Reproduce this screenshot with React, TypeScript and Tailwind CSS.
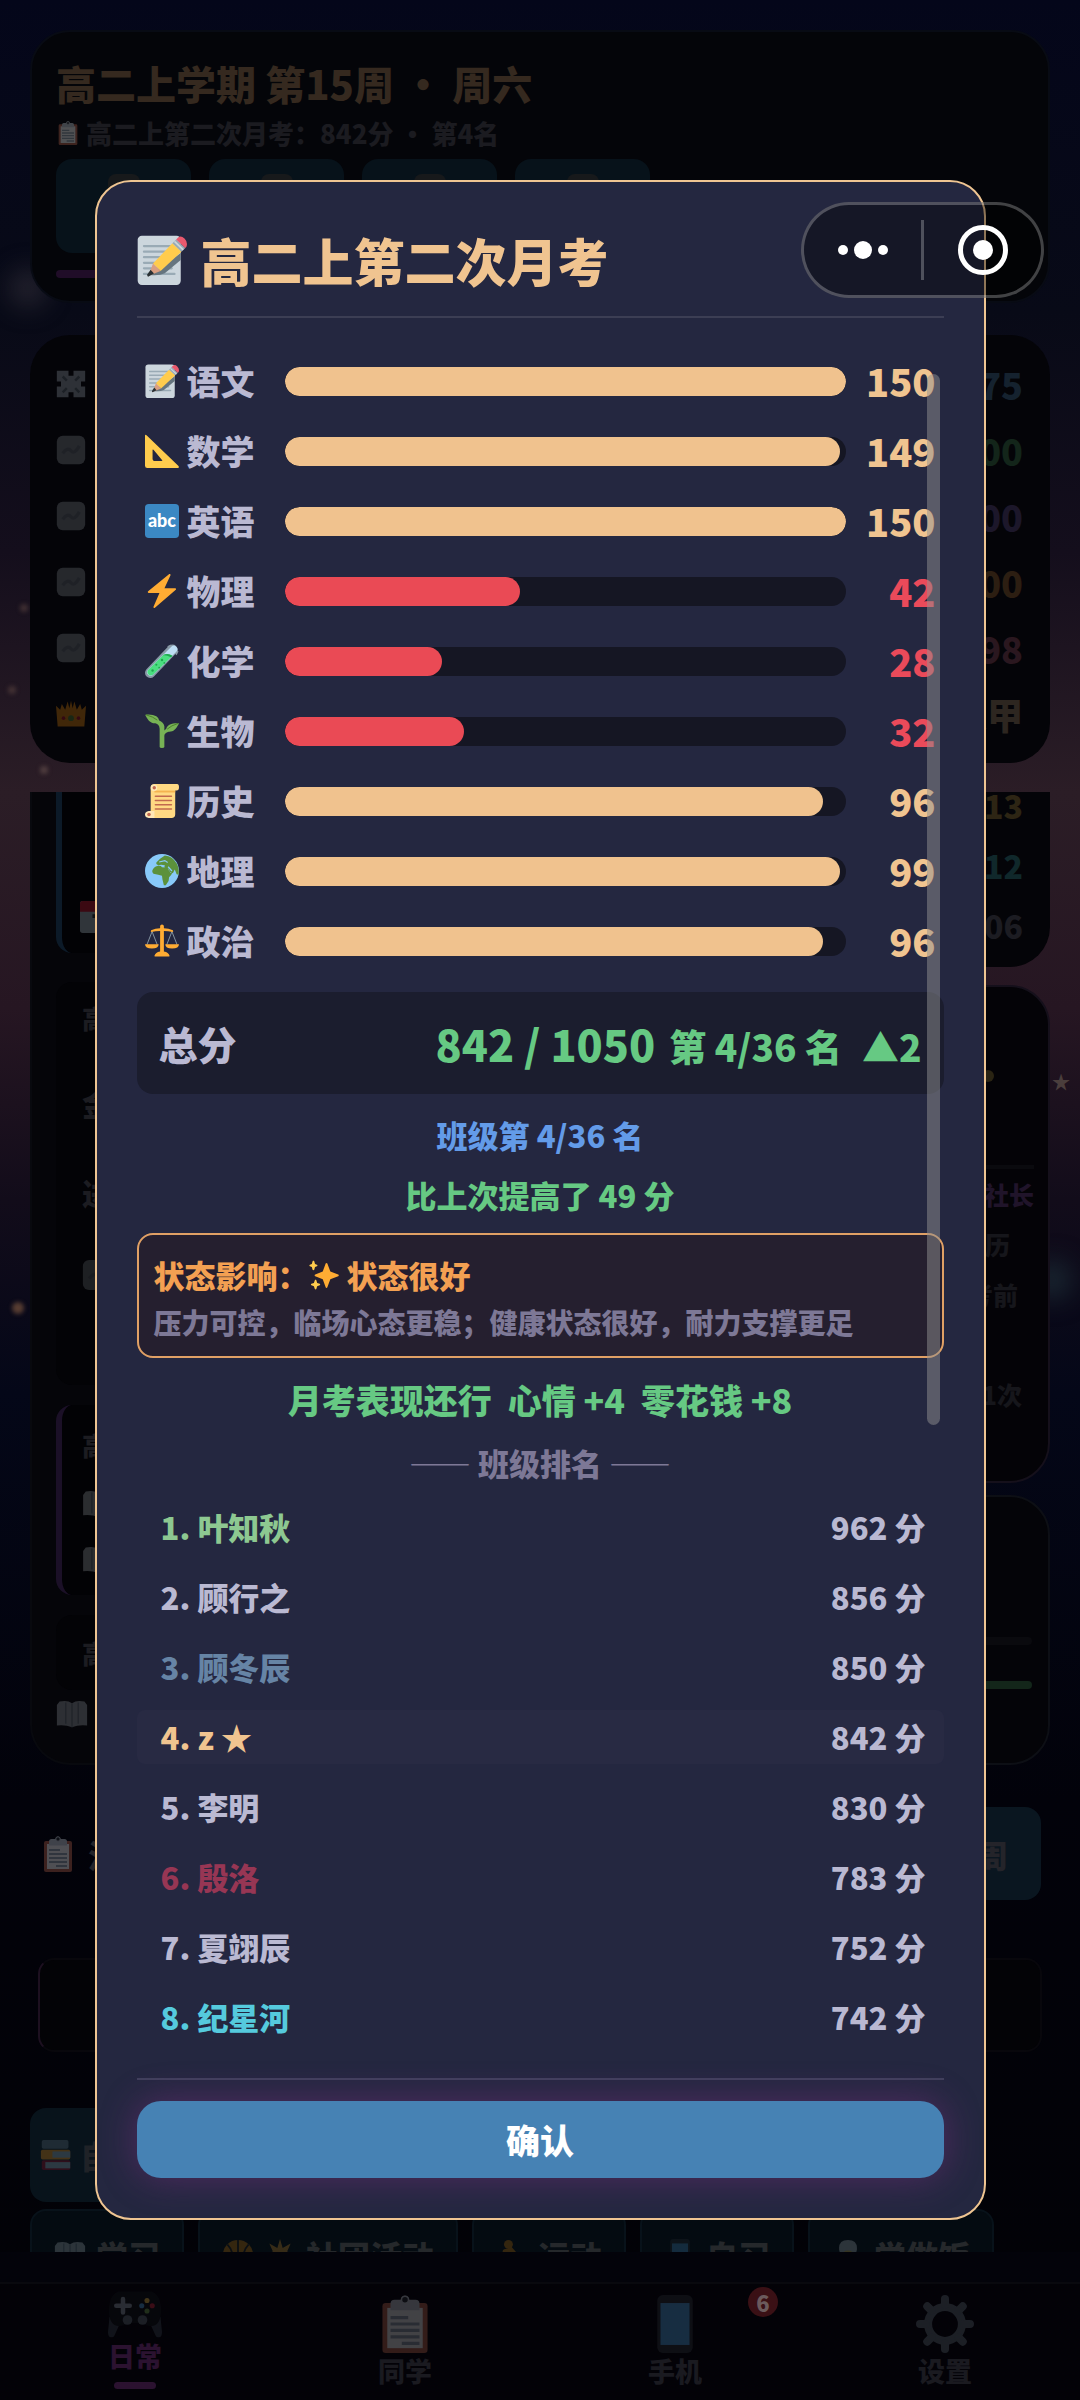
import React from "react";

type IconProps = { className: string };

function Svg({ className, children }: IconProps & { children: React.ReactNode }) {
  return (
    <svg viewBox="0 0 36 36" aria-hidden="true" className={className}>
      {children}
    </svg>
  );
}

function Memo({ className }: IconProps) {
  return (
    <Svg className={className}>
      <rect x="0.5" y="0.5" width="31" height="35.5" rx="3" fill="#CCD6DD" />
      <path
        d="M5 8h20M5 12h17M5 16h12M5 20h8M5 24h20M5 28h22"
        stroke="#99AAB5"
        strokeWidth="1.6"
        strokeLinecap="round"
      />
      <path d="M9.5 28.8 31.5 13v5L20 27.5q-4 2-10.500 1.300z" fill="#66757F" />
      <path d="M11.500 20.500 25.500 6l6.500 6-15 14z" fill="#FFCC4D" />
      <path d="M11.500 20.500 17 26l-8.600 3.400z" fill="#D99E82" />
      <path d="M9.800 25 12.200 27.700 8 30q-1-.6-.5-1.800z" fill="#292F33" />
      <path d="M25.500 6 28.200 3.200 34.800 9.300 32 12z" fill="#99AAB5" />
      <path d="M27 4.600 33.300 10.700" stroke="#CCD6DD" strokeWidth="1.200" />
      <path d="M28.200 3.200 29.600 1.800q2-1.800 4.600.8t1.400 5.800l-.8.900z" fill="#EA596E" />
    </Svg>
  );
}

function Triangle({ className }: IconProps) {
  return (
    <Svg className={className}>
      <path
        fillRule="evenodd"
        fill="#FFCC4D"
        d="M0 2Q0 .2 1.600 1.400L35.200 33.600Q37 36 34.500 36H2.500Q0 36 0 33.500zM8 17v9.500q0 2 2 2h7.500q1.500 0 .5-1L9 16.600q-1-.8-1 .4z"
      />
    </Svg>
  );
}

function Abc({ className }: IconProps) {
  return (
    <Svg className={className}>
      <rect width="36" height="36" rx="4" fill="#3B88C3" />
      <text
        x="18"
        y="24"
        textAnchor="middle"
        fontFamily="Lato, sans-serif"
        fontWeight="900"
        fontSize="19"
        fill="#fff"
      >
        abc
      </text>
    </Svg>
  );
}

function Bolt({ className }: IconProps) {
  return (
    <Svg className={className}>
      <path
        fill="#FFAC33"
        d="M32.900 15.600c-.1-.4-.5-.6-.9-.6H20.600L27 1.400c.2-.4.100-.9-.3-1.200-.4-.3-.9-.2-1.300.1L3.300 18.200c-.3.300-.4.700-.3 1.100.100.400.5.700.9.700h11.400L9 34.600c-.2.400-.1.900.3 1.200.4.300.9.200 1.200-.1l22.100-18.900c.3-.3.400-.7.300-1.200z"
      />
    </Svg>
  );
}

function Tube({ className }: IconProps) {
  return (
    <Svg className={className}>
      <path d="M5.500 30.500 29 6" stroke="#8899A6" strokeWidth="11" strokeLinecap="round" />
      <path d="M23.500 2.500 27.500.5 35.500 8 33.500 12z" fill="#8899A6" />
      <path d="M6 30 30.500 5.500" stroke="#BDDDF4" strokeWidth="7.500" strokeLinecap="round" />
      <path d="M3.500 27.300 19 12q5-3 10 .5L8.500 32.600q-2.500 1.900-4.800-.4t-.2-4.900z" fill="#4ADE80" />
      <path d="M19 12q5-3 10 .5l-1.500 1.500q-5-2.500-8.500-2z" fill="#1FA84F" />
      <g fill="#1FA84F">
        <circle cx="8" cy="28" r="1.300" />
        <circle cx="12" cy="22" r="1.100" />
        <circle cx="15" cy="25" r="1" />
        <circle cx="18" cy="17" r="1.300" />
        <circle cx="20.500" cy="20" r="1" />
      </g>
    </Svg>
  );
}

function Sprout({ className }: IconProps) {
  return (
    <Svg className={className}>
      <path
        fill="#77B255"
        d="M22.500 15.500C24 11 28 9.500 35.500 9.700q.8.200.2.900C32.500 16.500 30 19 25 18.700q-5 1.300-4.500 5.300V35q-.2 1-2.500 1t-2.500-1V15.500q-.5-5-4.500-5.800C6 10 3.500 7 .5 1.500Q.2.500 1.200.6 8 0 12 2.500q3 2 3 4.500 4.500 1.500 5.500 6v4.500z"
      />
      <path d="M1 .8Q9 3 13 6.500M35 10Q28 12 23.500 16" stroke="#3E721D" strokeWidth=".8" fill="none" />
    </Svg>
  );
}

function Scroll({ className }: IconProps) {
  return (
    <Svg className={className}>
      <path d="M6 4Q6 0 10 0h24q2 0 2 3.500T33.500 7H32v25q0 4-4 4H6z" fill="#FFD983" />
      <path d="M10 7h22V9H10z" fill="#F4B350" />
      <circle cx="9.500" cy="4" r="3.500" fill="#FFE8B6" />
      <circle cx="9.800" cy="4" r="1.800" fill="#C1694F" />
      <path d="M4 28.500h6V36H4q-4-.5-4-3.700t4-3.800z" fill="#FFE8B6" />
      <circle cx="4.200" cy="32.300" r="1.900" fill="#C1694F" />
      <path
        d="M11 13h17M11 17.500h17M11 22h17M11 26.500h17"
        stroke="#C1694F"
        strokeWidth="1.600"
        strokeLinecap="round"
      />
    </Svg>
  );
}

function Globe({ className }: IconProps) {
  return (
    <Svg className={className}>
      <circle cx="18" cy="18" r="18" fill="#88C9F9" />
      <path
        fill="#5C913B"
        d="M8 17q2-4 6-4.500 3-.3 4 1.500l6 .5q1 3 3 5.500l2-.5q-1 3-3.500 5l-.5 4-3 4.500h-2l-1.500-6-.5-4-4-1-5-1q-2-2-1-4zM12 9l4-4 5-3.500Q29 2 34 10.500 36.500 16 35.500 22l-2-.5-2-5-2 4-3-1.500-2-4-4-1 .5-2-4-.5-3 .5-2-1.500z"
      />
      <path d="M24.500 13.500 28.500 18M15 8.500l6-1.500 3 2" stroke="#88C9F9" strokeWidth="1.300" fill="none" />
    </Svg>
  );
}

function Scales({ className }: IconProps) {
  return (
    <Svg className={className}>
      <path d="M7.500 8 2 22M7.500 8 13 22M28.500 8 23 22M28.500 8 34 22" stroke="#8899A6" strokeWidth="1" />
      <path
        fill="#FFAC33"
        d="M16 2.500q0-2 2-2t2 2v2q5 .3 9.500 2 1 1-.2 2-5-1.200-9.300-1.200V29q5 1 6 4.500 0 1-1 1H11q-1 0-1-1Q11 30 16 29V7.300q-5 0-9.300 1.200-1.200-1-.2-2Q11 4.800 16 4.500zM0 21.500h14.500q0 4.500-7.200 4.500T0 21.500zM21.500 21.500H36q0 4.500-7.300 4.500t-7.200-4.500z"
      />
    </Svg>
  );
}

function Sparkles({ className }: IconProps) {
  return (
    <Svg className={className}>
      <path
        fill="#FFAC33"
        d="M35 17.500l-9.400-3.600L22 4.300C21.800 3.800 21.500 3.500 21 3.500s-.8.300-1 .8l-3.500 9.600-9 3.600c-.5.200-.7.600-.7 1s.2.800.7 1l9 3.600L20 32.700c.2.500.5.800 1 .8s.8-.3 1-.8l3.600-9.600 9.400-3.600c.5-.2.700-.6.700-1s-.2-.8-.7-1z"
      />
      <path
        fill="#FFCC4D"
        d="M12.800 28.600l-3-1-1-3.300c-.2-.4-.5-.6-.9-.6s-.7.200-.9.600l-1.100 3.300-3 1c-.4.200-.6.500-.6.900s.2.700.6.900l3 1.100 1.100 3.400c.2.400.5.600.9.600s.7-.2.900-.6l1-3.400 3-1.100c.4-.2.600-.5.600-.9s-.2-.7-.6-.9zM9.500 5.700 7.200 4.700 6.300 1.500C6.100 1.100 5.700.9 5.300.9s-.8.200-1 .6l-.9 3.200-2.300 1c-.4.200-.6.500-.6.900s.2.700.6.900l2.300 1 .9 3.200c.2.400.6.600 1 .6s.8-.2 1-.6l.9-3.200 2.300-1c.4-.2.600-.5.600-.9s-.2-.7-.6-.9z"
      />
    </Svg>
  );
}

function Clipboard({ className }: IconProps) {
  return (
    <Svg className={className}>
      <rect x="4" y="5" width="28" height="31" rx="2" fill="#C1694F" />
      <rect x="7" y="8" width="22" height="25" fill="#fff" />
      <path d="M9 9.500V5.500Q9 3 11.500 3h4a2.500 2.500 0 0 1 5 0h4Q27 3 27 5.500v4z" fill="#CCD6DD" />
      <circle cx="18" cy="3" r="2.200" fill="#292F33" stroke="#CCD6DD" />
      <path d="M9 14h11M9 18h18M9 22h18M9 26h18M16 30h11" stroke="#99AAB5" strokeWidth="2" />
    </Svg>
  );
}

function Gamepad({ className }: IconProps) {
  return (
    <Svg className={className}>
      <path d="M1 22 9 24l-5 11q-4 2-4-3zM35 22l-8 2 5 11q4 2 4-3z" fill="#3d4852" />
      <path d="M7 5h22q6 2 6.500 12.500Q35 28 29 28q-4 0-7-2h-8q-3 2-7 2-6 0-6.500-10.500Q1 7 7 5z" fill="#12161a" />
      <path d="M10 10v9M5.500 14.500h9" stroke="#99AAB5" strokeWidth="3" strokeLinecap="round" />
      <circle cx="13" cy="24" r="3.200" fill="#66757F" />
      <circle cx="23" cy="24" r="3.200" fill="#66757F" />
      <circle cx="26" cy="11" r="1.700" fill="#FFCC4D" />
      <circle cx="29.500" cy="14.500" r="1.700" fill="#DD2E44" />
      <circle cx="26" cy="18" r="1.700" fill="#77B255" />
      <circle cx="22.500" cy="14.500" r="1.700" fill="#55ACEE" />
    </Svg>
  );
}

function Phone({ className }: IconProps) {
  return (
    <Svg className={className}>
      <rect x="7" width="22" height="36" rx="3.500" fill="#31373D" />
      <rect x="9" y="5" width="18" height="26" fill="#55ACEE" />
    </Svg>
  );
}

function Gear({ className }: IconProps) {
  return (
    <Svg className={className}>
      <circle cx="18" cy="18" r="10.500" fill="none" stroke="#66757F" strokeWidth="5" />
      <path
        d="M18 2.500V6M18 30v3.500M2.500 18H6M30 18h3.500M7 7l2.500 2.500M26.500 26.500 29 29M7 29l2.500-2.500M26.500 9.500 29 7"
        stroke="#66757F"
        strokeWidth="5"
        strokeLinecap="round"
      />
    </Svg>
  );
}

function Book({ className }: IconProps) {
  return (
    <Svg className={className}>
      <path d="M1 8 4 4q9-2 14 2 5-4 14-2l3 4v23q-10-1-17 2-7-3-17-2z" fill="#CCD6DD" />
      <path d="M18 6v27M11 5v24M25 5v24" stroke="#8899A6" strokeWidth="1.500" />
    </Svg>
  );
}

function Books({ className }: IconProps) {
  return (
    <Svg className={className}>
      <rect x="2" y="1" width="30" height="10" rx="2" fill="#66757F" />
      <rect x="1" y="12" width="33" height="11" rx="2" fill="#F4900C" />
      <rect x="14" y="14" width="20" height="7" fill="#99AAB5" />
      <rect x="2" y="24" width="32" height="11" rx="2" fill="#A0041E" />
      <rect x="6" y="26" width="28" height="7" fill="#99AAB5" />
    </Svg>
  );
}

function Crown({ className }: IconProps) {
  return (
    <Svg className={className}>
      <path d="M0 8l5 5 2-7 4 7 3-10 2 8 2-9 2 9 2-8 3 10 4-7 2 7 5-5-2 25H2z" fill="#F4900C" />
      <circle cx="18" cy="23" r="3.500" fill="#5C913B" />
      <circle cx="9" cy="23" r="2.200" fill="#BE1931" />
      <circle cx="27" cy="23" r="2.200" fill="#BE1931" />
    </Svg>
  );
}

function Runner({ className }: IconProps) {
  return (
    <Svg className={className}>
      <circle cx="14" cy="6" r="5" fill="#F4900C" />
      <path
        d="M16 11 17 20l8 6-2 8M17 20l-5 8-8 2M10 14l7-2 6 7 6-1"
        stroke="#F4900C"
        strokeWidth="5"
        fill="none"
        strokeLinecap="round"
      />
    </Svg>
  );
}

function Ball({ className }: IconProps) {
  return (
    <Svg className={className}>
      <circle cx="18" cy="18" r="17" fill="#F4900C" />
      <path d="M18 1v34M1 18h34M6 6q11 12 0 24M30 6q-11 12 0 24" stroke="#231F20" strokeWidth="2" fill="none" />
    </Svg>
  );
}

function Star({ className }: IconProps) {
  return (
    <Svg className={className}>
      <path
        d="M18 0l3 10 9-5-4 9 10 4-10 4 4 9-9-4-3 9-3-9-9 4 4-9-10-4 10-4-4-9 9 5z"
        fill="#FFAC33"
      />
    </Svg>
  );
}

function Cook({ className }: IconProps) {
  return (
    <Svg className={className}>
      <path d="M8 12q-1-11 10-11t10 11l-2 8H10z" fill="#CCD6DD" />
      <circle cx="18" cy="21" r="8" fill="#FFDC5D" />
      <path d="M4 36q0-8 8-8h12q8 0 8 8z" fill="#CCD6DD" />
    </Svg>
  );
}

function Tile({ className }: IconProps) {
  return (
    <Svg className={className}>
      <rect x="1" y="1" width="34" height="34" rx="7" fill="#8a9299" />
      <path d="M8 22q6-8 10-3t10-6" stroke="#717a82" strokeWidth="4" fill="none" />
    </Svg>
  );
}

function Puzzle({ className }: IconProps) {
  return (
    <Svg className={className}>
      <path d="M1 2h14v6h6V2h14v13h-5v6h5v13H21v-6h-6v6H1V21h5v-6H1z" fill="#AAB8C2" />
      <path d="M8 9l5 5M28 9l-5 5M8 28l5-5M28 28l-5-5" stroke="#66757F" strokeWidth="3" />
    </Svg>
  );
}

function Calendar({ className }: IconProps) {
  return (
    <Svg className={className}>
      <rect width="36" height="36" rx="3" fill="#99AAB5" />
      <path d="M0 3Q0 0 3 0h30q3 0 3 3v9H0z" fill="#BE1931" />
      <path d="M14 17h5v15" stroke="#292F33" strokeWidth="4" fill="none" />
    </Svg>
  );
}

const subjects = [
  { name: "语文", score: 150, max: 150, Icon: Memo },
  { name: "数学", score: 149, max: 150, Icon: Triangle },
  { name: "英语", score: 150, max: 150, Icon: Abc },
  { name: "物理", score: 42, max: 100, Icon: Bolt },
  { name: "化学", score: 28, max: 100, Icon: Tube },
  { name: "生物", score: 32, max: 100, Icon: Sprout },
  { name: "历史", score: 96, max: 100, Icon: Scroll },
  { name: "地理", score: 99, max: 100, Icon: Globe },
  { name: "政治", score: 96, max: 100, Icon: Scales },
];

const ranking = [
  { name: "叶知秋", score: 962, color: "text-[#8dc891]" },
  { name: "顾行之", score: 856, color: "text-[#bab9d2]" },
  { name: "顾冬辰", score: 850, color: "text-[#6684a5]" },
  { name: "z ★", score: 842, color: "text-[#f0c490]", self: true },
  { name: "李明", score: 830, color: "text-[#bab9d2]" },
  { name: "殷洛", score: 783, color: "text-[#973654]" },
  { name: "夏翊辰", score: 752, color: "text-[#bab9d2]" },
  { name: "纪星河", score: 742, color: "text-[#55cadd]" },
];

const stats = [
  { value: "75", color: "text-[#15222f]", Icon: Puzzle },
  { value: "100", color: "text-[#13251a]", Icon: Tile },
  { value: "100", color: "text-[#1c172a]", Icon: Tile },
  { value: "100", color: "text-[#2c1e12]", Icon: Tile },
  { value: "98", color: "text-[#2a171f]", Icon: Tile },
  { value: "路人甲", color: "text-[#2d2620]", Icon: Crown },
];

const chips = [
  { label: "学习", icons: [Book] },
  { label: "社团活动", icons: [Ball, Star] },
  { label: "运动", icons: [Runner] },
  { label: "自习", icons: [Phone] },
  { label: "学做饭", icons: [Cook] },
];

const tabs = [
  { label: "日常", Icon: Gamepad, active: true },
  { label: "同学", Icon: Clipboard },
  { label: "手机", Icon: Phone, badge: 6 },
  { label: "设置", Icon: Gear },
];

function Sky() {
  return (
    <div aria-hidden="true" className="absolute inset-0">
      <span className="absolute top-[268px] left-2 size-10 rounded-full bg-[#3a3540]/50 blur-md" />
      <span className="absolute top-[604px] left-5 size-2 rounded-full bg-[#5a4540]/60 blur-[2px]" />
      <span className="absolute top-[686px] left-2 size-2 rounded-full bg-[#5a4540]/60 blur-[2px]" />
      <span className="absolute top-[766px] left-10 size-2 rounded-full bg-[#6a5550]/60 blur-[2px]" />
      <span className="absolute top-[1302px] left-3 size-3 rounded-full bg-[#6a4a38]/80 blur-[2px]" />
      <span className="absolute top-[1260px] right-2 size-10 rounded-full bg-[#1c2a34]/80 blur-md" />
      <span className="absolute top-[1069px] right-[10px] text-[18px] leading-6 text-[#4a3e3c]">★</span>
    </div>
  );
}

function HeaderCard() {
  return (
    <header className="mx-[30px] mt-[30px] rounded-[40px] border-2 border-[#080b14] bg-[#040509] px-6 pt-[23px] pb-[23px]">
      <h1 className="text-[40px] leading-[56px] text-[#35291f]">高二上学期 第15周 · 周六</h1>
      <p className="mt-1 flex items-center gap-[6px] text-[26px] leading-9 text-[#1b1b20]">
        <Clipboard className="size-6 opacity-30" />
        高二上第二次月考：842分 · 第4名
      </p>
      <div className="mt-2 flex gap-[18px]">
        {[0, 1, 2, 3].map((i) => (
          <div key={i} className="flex h-[94px] w-[135px] justify-center rounded-2xl bg-[#07121a] pt-[15px]">
            <div className="size-8 rounded-lg bg-[#17191b]" />
          </div>
        ))}
      </div>
      <div className="mt-[17px] h-2 w-1/2 rounded-full bg-[#200d28]" />
    </header>
  );
}

function StatsCard() {
  return (
    <section className="mx-[30px] mt-8 rounded-[40px] bg-[#040408] py-4 pr-[27px] pl-[26px]">
      {stats.map(({ value, color, Icon }, i) => (
        <div key={i} className="flex h-[66px] items-center justify-between">
          <Icon className="size-[30px] opacity-25" />
          <span className={`text-[36px] ${color}`}>{value}</span>
        </div>
      ))}
    </section>
  );
}

function Feed() {
  return (
    <div className="w-[60%] rounded-b-[40px] border-x-2 border-b-2 border-[#08090e] bg-[#050509] pb-6 pl-6 text-[26px] text-[#1c1c21]">
      <div className="flex h-[161px] flex-col items-start justify-end gap-5 rounded-bl-2xl border-l-[6px] border-[#0c1a28] bg-[#020205] pb-5 pl-[18px]">
        <span className="pl-3 text-[#30151a]">！</span>
        <Calendar className="size-8 opacity-30" />
      </div>
      <div className="mt-[29px] flex h-[403px] flex-col gap-11 rounded-2xl bg-[#030306] px-[26px] py-4">
        <span>高二上</span>
        <span className="text-[30px]">金</span>
        <span className="text-[30px]">进</span>
        <Tile className="size-8 opacity-20" />
      </div>
      <div className="mt-5 flex h-[190px] flex-col gap-6 rounded-l-2xl border-l-[6px] border-[#1b1027] bg-[#020205] py-5 pl-5">
        <span>高二上</span>
        <Book className="size-8 opacity-20" />
        <Book className="size-8 opacity-20" />
      </div>
      <div className="mt-5 flex h-[75px] items-center rounded-2xl bg-[#030306] px-[26px]">高二上</div>
      <Book className="mt-2 size-8 opacity-20" />
    </div>
  );
}

function SideCards() {
  return (
    <div className="flex flex-1 flex-col text-right text-[25px] text-[#16161b]">
      <div className="flex h-[175px] flex-col justify-end overflow-hidden rounded-b-[40px] bg-[#040408] pr-[27px] pb-3 text-[32px]">
        <span className="leading-[60px] text-[#2d2514]">13</span>
        <span className="leading-[60px] text-[#10282b]">12</span>
        <span className="leading-[60px] text-[#1c1c22]">06</span>
      </div>
      <div className="mt-[18px] h-[498px] rounded-[40px] border-2 border-[#15101b] bg-[#040307] pr-[14px] pl-4">
        <div className="flex h-[182px] items-center justify-end border-b-4 border-[#0a0a0e] pr-10">
          <div className="size-3 rounded-full bg-[#2a2413]" />
        </div>
        <p className="leading-[50px] text-[#20142a]">副社长</p>
        <p className="pr-6 leading-[50px]">履历</p>
        <p className="pr-4 leading-[50px]">考前</p>
        <p className="mt-[50px] pr-3 leading-[50px]">1次</p>
      </div>
      <div className="mt-3 flex h-[270px] flex-col justify-end rounded-[40px] border-2 border-[#0d0f15] bg-[#040408] px-4 pb-[74px]">
        <div className="h-2 rounded-full bg-[#0a0a0e]" />
        <div className="mt-9 h-2 rounded-full bg-[#13261a]" />
      </div>
    </div>
  );
}

function TabBar() {
  return (
    <nav className="bg-[#03030a] pt-[30px]">
      <div className="grid h-[118px] grid-cols-4 border-t-2 border-[#09090e] bg-[#030207] text-[27px]">
        {tabs.map(({ label, Icon, active, badge }) => (
          <button
            key={label}
            type="button"
            className={`flex flex-col items-center ${active ? "text-[#2b1230]" : "pt-[11px] text-[#1a1a20]"}`}
          >
            <span className="relative">
              <Icon className={active ? "size-[54px] opacity-25" : "size-[58px] opacity-25"} />
              {badge && (
                <span className="absolute -top-2 left-[102px] flex size-[30px] items-center justify-center rounded-full bg-[#3a1015] text-[22px] text-[#6b5a5c]">
                  {badge}
                </span>
              )}
            </span>
            <span className="leading-9">{label}</span>
            {active && <span className="mt-2 h-[7px] w-[42px] rounded-full bg-[#2b1230]" />}
          </button>
        ))}
      </div>
    </nav>
  );
}

function GamePage() {
  return (
    <div className="relative flex h-full flex-col">
      <HeaderCard />
      <StatsCard />
      <main className="mt-[29px] min-h-0 flex-1 overflow-hidden">
        <div className="mx-[30px] flex gap-5">
          <Feed />
          <SideCards />
        </div>
        <div className="mt-[42px] mr-[39px] ml-10 flex items-center justify-between text-[32px] text-[#24242a]">
          <span className="flex items-center gap-3">
            <Clipboard className="size-9 opacity-30" />
            活动
          </span>
          <button type="button" className="h-[93px] rounded-2xl bg-[#0a1620] px-[33px]">
            下周
          </button>
        </div>
        <div className="mx-[38px] mt-[58px] h-[94px] rounded-2xl border-2 border-[#08070c] border-l-[#1d1020] bg-[#030306]" />
        <button
          type="button"
          className="mt-[56px] ml-[30px] flex h-[94px] items-center gap-2 rounded-2xl bg-[#08131b] px-[10px] text-[32px] text-[#1f2227]"
        >
          <Books className="size-8 opacity-25" />
          自由行动
        </button>
        <div className="mt-[7px] ml-[30px] flex gap-[14px]">
          {chips.map(({ label, icons }) => (
            <button
              key={label}
              type="button"
              className="flex h-[92px] items-center justify-center gap-[10px] rounded-t-2xl border-2 border-[#08121a] bg-[#040b11] px-[22px] text-[32px] whitespace-nowrap text-[#25282b]"
            >
              {icons.map((Icon, i) => (
                <Icon key={i} className="size-8 opacity-20" />
              ))}
              {label}
            </button>
          ))}
        </div>
      </main>
      <TabBar />
    </div>
  );
}

function SubjectRow({ name, score, max, Icon }: (typeof subjects)[number]) {
  const low = score / max < 0.6;
  return (
    <li className="flex h-[70px] items-center px-2">
      <Icon className="size-[34px] shrink-0" />
      <span className="ml-2 w-[98px] text-[34px] leading-none text-[#bab9d2]">{name}</span>
      <div className="h-[29px] flex-1 overflow-hidden rounded-full bg-[#151623]">
        <div
          className={`h-full rounded-full ${low ? "bg-[#ea4a55]" : "bg-[#f0c28e]"}`}
          style={{ width: `${Math.floor((score / max) * 100)}%` }}
        />
      </div>
      <span
        className={`w-[90px] text-right text-[38px] leading-none ${low ? "text-[#ea4a5a]" : "text-[#f0c490]"}`}
      >
        {score}
      </span>
    </li>
  );
}

function ExamDialog() {
  return (
    <div
      role="dialog"
      aria-labelledby="exam-title"
      className="flex h-[85%] w-[82.5%] flex-col rounded-[36px] border-2 border-[#efc592] bg-[#242740] px-10"
    >
      <div className="flex items-center gap-[14px] border-b-2 border-[#3c3e54] pt-[41px] pb-[19px]">
        <Memo className="size-[50px]" />
        <h2 id="exam-title" className="text-[51px] leading-[74px] text-[#f0c490]">
          高二上第二次月考
        </h2>
      </div>

      <div className="relative min-h-0 flex-1 pt-7 text-[31px]">
        <ul>
          {subjects.map((s) => (
            <SubjectRow key={s.name} {...s} />
          ))}
        </ul>

        <div className="mt-4 flex h-[102px] items-center justify-between rounded-2xl bg-[#1b1d2e] px-[22px]">
          <span className="text-[39px] text-[#bab9d2]">总分</span>
          <p className="flex items-baseline text-[#66c983]">
            <span className="text-[43px]">842 / 1050</span>
            <span className="ml-[14px] text-[37px]">第 4/36 名</span>
            <span className="ml-5 text-[37px]">▲2</span>
          </p>
        </div>

        <div className="mt-[11px] text-center leading-[60px]">
          <p className="text-[#639be8]">班级第 4/36 名</p>
          <p className="text-[#66c983]">比上次提高了 49 分</p>
        </div>

        <div className="mt-2 rounded-2xl border-2 border-[#e0a065] bg-[#251f2f] px-[15px] pt-4 pb-[11px]">
          <p className="flex items-center leading-[48px] text-[#f3a052]">
            状态影响：
            <Sparkles className="mr-2 size-[30px]" />
            状态很好
          </p>
          <p className="text-[28px] leading-[46px] text-[#7d7896]">
            压力可控，临场心态更稳；健康状态很好，耐力支撑更足
          </p>
        </div>

        <p className="mt-3 flex justify-center gap-4 text-[34px] leading-[60px] text-[#66c983]">
          <span>月考表现还行</span>
          <span>心情 +4</span>
          <span>零花钱 +8</span>
        </p>
        <h3 className="text-center leading-[66px] text-[#7d7896]">—— 班级排名 ——</h3>

        <ol className="mt-1 flex flex-col gap-4">
          {ranking.map((r, i) => (
            <li
              key={r.name}
              className={`flex h-[54px] items-center justify-between rounded-lg pr-[18px] pl-6 ${r.self ? "bg-[#282a43]" : ""}`}
            >
              <span className={r.color}>
                {i + 1}. {r.name}
              </span>
              <span className="text-[#bab9d2]">{r.score} 分</span>
            </li>
          ))}
        </ol>

        <div className="absolute top-14 right-1 h-[1051px] w-[13px] rounded-full bg-[#8f8f8f]/50" />
      </div>

      <div className="border-t-2 border-[#40405c] pt-[21px] pb-10">
        <button
          type="button"
          className="h-[77px] w-full rounded-3xl bg-[#4682b4] text-[34px] text-white shadow-[0_0_36px_rgba(150,50,150,0.4)]"
        >
          确认
        </button>
      </div>
    </div>
  );
}

function Capsule() {
  return (
    <div className="absolute top-[202px] right-9 flex h-24 w-[243px] items-center rounded-full border-[3px] border-white/25 bg-black/40">
      <button type="button" aria-label="更多" className="flex flex-1 items-center justify-center gap-[6px]">
        <span className="size-[10px] rounded-full bg-white" />
        <span className="size-[18px] rounded-full bg-white" />
        <span className="size-[10px] rounded-full bg-white" />
      </button>
      <span className="h-[60px] w-[3px] bg-white/25" />
      <button type="button" aria-label="关闭" className="flex flex-1 items-center justify-center">
        <span className="flex size-[50px] items-center justify-center rounded-full border-[5px] border-white">
          <span className="size-5 rounded-full bg-white" />
        </span>
      </button>
    </div>
  );
}

export default function App() {
  return (
    <div
      lang="zh-CN"
      className="relative h-screen overflow-hidden bg-[linear-gradient(180deg,#04061a_0%,#080a17_13%,#140e1c_23%,#2b1d26_33%,#261622_42%,#120c1a_50%,#040718_58%,#02020a_75%,#020206_100%)] font-['Noto_Sans_CJK_SC',sans-serif] font-black"
    >
      <Sky />
      <GamePage />
      <div className="absolute inset-0 flex items-center justify-center">
        <ExamDialog />
      </div>
      <Capsule />
    </div>
  );
}
